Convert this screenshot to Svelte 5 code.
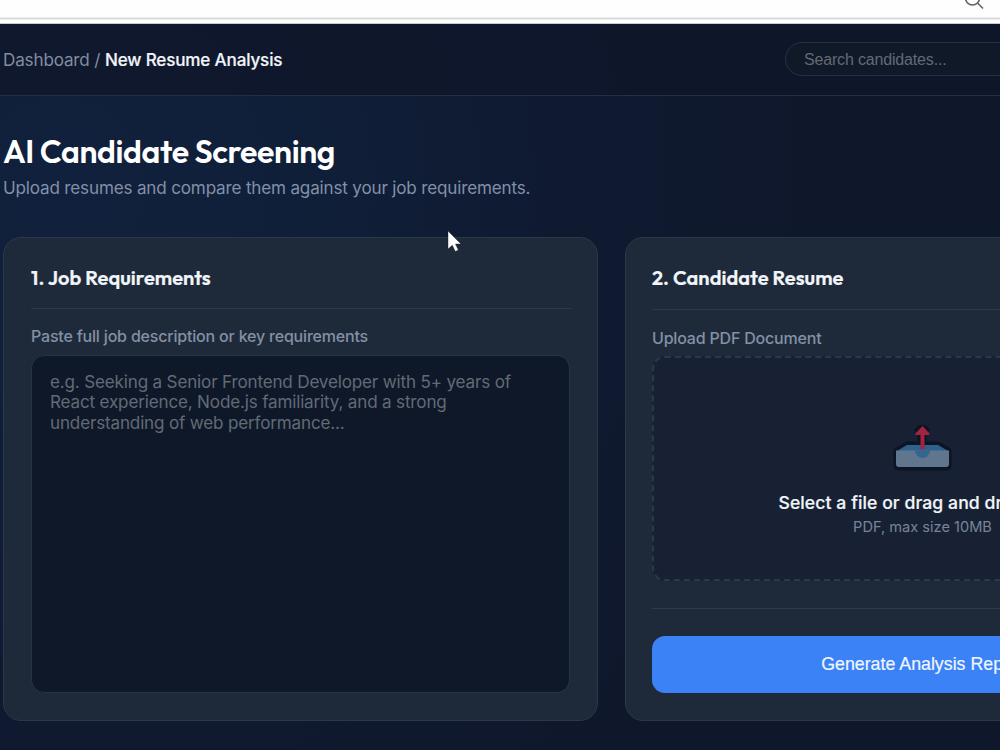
<script lang="ts">
  let query = $state('');
  let requirements = $state('');
  const hint = 'e.g. Seeking a Senior Frontend Developer with 5+ years of React experience, Node.js familiarity, and a strong understanding of web performance...';
</script>

<div class="window">
  <div class="browser-bar">
    <svg class="zoom-icon" viewBox="0 0 20 20" width="20" height="20" aria-hidden="true">
      <circle cx="8.5" cy="8" r="7" />
      <path d="M13.5 13l5.5 5.5" />
    </svg>
  </div>

  <div class="app">
    <header class="topbar">
      <nav class="breadcrumb">Dashboard / <strong>New Resume Analysis</strong></nav>
      <input class="search" type="text" placeholder="Search candidates..." bind:value={query} />
    </header>

    <main>
      <h1>AI Candidate Screening</h1>
      <p class="subtitle">Upload resumes and compare them against your job requirements.</p>

      <div class="grid">
        <section class="card">
          <h2>1. Job Requirements</h2>
          <label for="requirements">Paste full job description or key requirements</label>
          <textarea id="requirements" placeholder={hint} bind:value={requirements}></textarea>
        </section>

        <section class="card resume">
          <h2>2. Candidate Resume</h2>
          <span class="label">Upload PDF Document</span>
          <div class="dropzone">
            <svg class="tray" viewBox="0 0 64 52" width="64" height="52" aria-hidden="true">
              <path class="outline" d="M7 26L17 20H48L58 26V40q0 2-2 2H9q-2 0-2-2z" />
              <path class="outline arrow" d="M32 24V3M27 8l5-5 5 5" />
              <path fill="#32608c" d="M6 26.500L17 20H48L59 26.500z" />
              <path fill="#60768f" d="M6 25.500H59V39q0 3-3 3H9q-3 0-3-3z" />
              <path fill="#32658f" d="M25 25.500H40a7.500 7.500 0 0 1-15 0z" />
              <path fill="#a4243f" d="M32.500 1l7 7.500q.7 1.500-1 1.500H34.500V23q0 1.500-2 1.500t-2-1.500V10H26.500q-1.700 0-1-1.500z" />
            </svg>
            <strong>Select a file or drag and drop here</strong>
            <small>PDF, max size 10MB</small>
          </div>
          <div class="actions">
            <button type="button">Generate Analysis Report</button>
          </div>
        </section>
      </div>
    </main>
  </div>

  <svg class="cursor" viewBox="0 0 16 24" width="16" height="24" aria-hidden="true">
    <path d="M1 1V19L5.300 15.200L8.300 21.500L11.300 20L8.500 14H14z" />
  </svg>
</div>

<style>
  :global(body) { margin: 0; background: #0f172a; }
  .window {
    position: relative; width: 1000px; height: 750px; overflow: hidden;
    font-family: Inter, sans-serif; color: #f1f5f9;
  }
  .window * { box-sizing: border-box; }
  .browser-bar {
    height: 24px; background: linear-gradient(#fefefe 17px, #dadada 18px, #dadada 19px, #fff 20px, #fff 23px, #9199a3 24px);
    display: flex; justify-content: flex-end; padding-right: 16px;
  }
  .zoom-icon { margin-top: -10px; fill: none; stroke: #606366; stroke-width: 1.6; }
  .app {
    width: 1246px; height: 726px;
    background: radial-gradient(circle at 60px 160px, #11203c 0, #10203a 180px, #0f1a31 500px, #0f172a 800px);
  }
  .topbar {
    height: 72px; display: flex; align-items: center; justify-content: space-between;
    padding: 0 27px 1px 3px; border-bottom: 1px solid #242f43; background: #0f172ae0;
  }
  .breadcrumb { font-size: 17.1px; letter-spacing: -.17px; color: #818da2; white-space: nowrap; }
  .breadcrumb strong { font-weight: 500; color: #f1f5f9; -webkit-text-stroke: .2px #f1f5f9; }
  .search {
    width: 434px; height: 34px; padding: 1px 18px 0; border-radius: 17px;
    border: 1px solid #263145; background: #0f1928; outline: none;
    font: 16px "Liberation Sans", Arial, sans-serif; letter-spacing: -.17px; color: #f1f5f9;
  }
  .search::placeholder { color: #636a76; opacity: 1; }
  main { padding: 35px 27px 0 3px; }
  h1 {
    margin: 0; font: 600 32px/40px Outfit, Lato, sans-serif; letter-spacing: -.36px; color: #fff;
  }
  .subtitle { margin: 5px 0 0; font-size: 17.1px; line-height: 24px; letter-spacing: -.18px; color: #8290a8; }
  .grid { display: grid; grid-template-columns: 595px 595px; gap: 27px; margin-top: 37px; }
  .card {
    height: 484px; padding: 27px 26px 27px 27px; border: 1px solid #2b3848; border-radius: 18px;
    background: #1e2a3a; display: flex; flex-direction: column;
  }
  h2 {
    margin: 0 -1px 17px 0; padding-bottom: 17px; border-bottom: 1px solid #2b3949;
    font: 600 20px/26px Outfit, Lato, sans-serif; letter-spacing: .05px; color: #f1f5f9;
    -webkit-text-stroke: .2px #f1f5f9;
  }
  label, .label { font-size: 16px; line-height: 20px; letter-spacing: -.19px; font-weight: 500; color: #8490a4; }
  textarea {
    width: 539px; height: 338px; margin-top: 9px; padding: 15.500px 18px; resize: none;
    border: 1px solid #273347; border-radius: 13px; background: #0f1829; outline: none;
    font: 17.1px/20.7px Inter, sans-serif; letter-spacing: -.18px; color: #f1f5f9;
  }
  textarea::placeholder { color: #626a76; opacity: 1; }
  .resume { padding-left: 26px; }
  .resume h2 { margin-bottom: 18px; padding-bottom: 18px; }
  .dropzone {
    height: 225px; margin-top: 8px; padding-top: 67px; border: 2px dashed #2b3849; border-radius: 13px;
    background: #172133; display: flex; flex-direction: column; align-items: center;
  }
  .dropzone strong {
    margin-top: 14px; font-size: 17.6px; line-height: 24px; font-weight: 500; white-space: nowrap;
    letter-spacing: .08px; -webkit-text-stroke: .2px #f1f5f9;
  }
  .dropzone small { margin-top: 2px; font-size: 14.6px; line-height: 20px; color: #77849a; }
  .tray { margin-left: -1px; }
  .tray .outline { fill: #0c1524; stroke: #0c1524; stroke-width: 7; stroke-linejoin: round; }
  .tray .arrow { stroke-width: 9; }
  .actions { margin-top: 27px; padding-top: 27px; border-top: 1px solid #2c3a4b; }
  button {
    width: 100%; height: 57px; border: 0; border-radius: 13px; background: #3b82f6; color: #eff6ff;
    font: 17.8px "Liberation Sans", Arial, sans-serif; -webkit-text-stroke: .2px #eff6ff;
  }
  .cursor { position: absolute; left: 447px; top: 230px; fill: #fff; stroke: #111827; stroke-width: .4; }
</style>
